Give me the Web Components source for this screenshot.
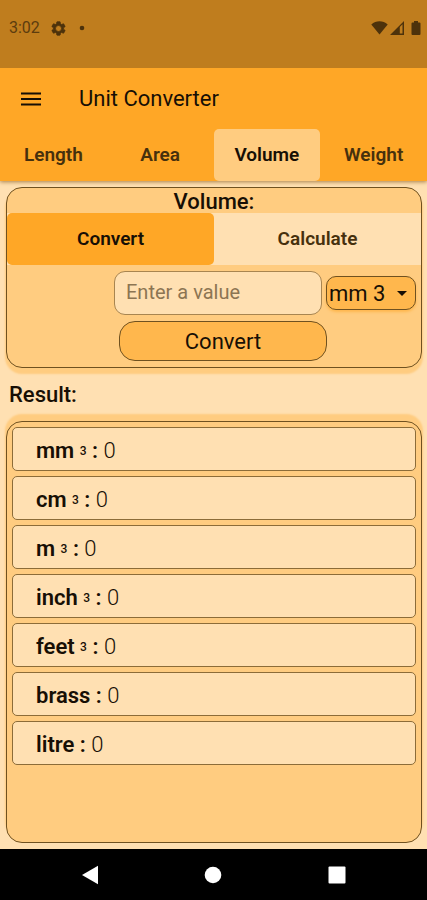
<!DOCTYPE html>
<html lang="en">
<head>
<meta charset="utf-8">
<meta name="viewport" content="width=device-width, initial-scale=1">
<title>Unit Converter</title>
<style>
:root{--bar:#ffa726;--status:#bf7d1e;--page:#ffe0b2;--card:#ffcc80;--accent:#ffb74d;--ink:#170f05;--line:#6f5120}
body{margin:0;background:var(--page);color:var(--ink);font-family:Roboto,"Noto Sans",sans-serif}
</style>
</head>
<body>
<unit-app></unit-app>
<script>
function define(name, html, setup) {
  const template = document.createElement('template');
  template.innerHTML = html;
  customElements.define(name, class extends HTMLElement {
    constructor() {
      super();
      this.attachShadow({ mode: 'open' }).append(template.content.cloneNode(true));
    }
    connectedCallback() { if (setup) setup(this, this.shadowRoot); }
  });
}

define('status-bar', `
<style>
:host{display:flex;justify-content:space-between;align-items:flex-start;box-sizing:border-box;height:68px;padding:18px 6px 0 9px;background:var(--status);color:#5c3c0e;font-size:16px;line-height:20px}
div{display:flex;align-items:center;height:20px}
svg{display:block;fill:#4d320b}
.gear{margin:0 12px 0 10px;stroke:#4d320b;stroke-width:1}
.signal{margin:0 7px 0 2px}
</style>
<div><span>3:02</span>
<svg class="gear" width="17" height="17" viewBox="0 0 24 24"><path d="M19.14 12.94c.04-.3.06-.61.06-.94s-.02-.64-.07-.94l2.03-1.58a.49.49 0 0 0 .12-.61l-1.92-3.32a.49.49 0 0 0-.59-.22l-2.39.96c-.5-.38-1.03-.7-1.62-.94l-.36-2.54a.48.48 0 0 0-.48-.41h-3.84c-.24 0-.43.17-.47.41l-.36 2.54c-.59.24-1.13.57-1.62.94l-2.39-.96a.48.48 0 0 0-.59.22L2.74 8.87a.48.48 0 0 0 .12.61l2.03 1.58c-.05.3-.09.63-.09.94s.02.64.07.94l-2.03 1.58a.49.49 0 0 0-.12.61l1.92 3.32c.12.22.37.29.59.22l2.39-.96c.5.38 1.03.7 1.62.94l.36 2.54c.05.24.24.41.48.41h3.84c.24 0 .44-.17.47-.41l.36-2.54c.59-.24 1.13-.56 1.62-.94l2.39.96c.22.08.47 0 .59-.22l1.92-3.32a.48.48 0 0 0-.12-.61zM12 16.2a4.2 4.2 0 1 1 0-8.4 4.2 4.2 0 0 1 0 8.400z"/></svg>
<svg width="6" height="6" viewBox="0 0 6 6"><circle cx="3" cy="3" r="2.300"/></svg></div>
<div>
<svg width="17" height="14" viewBox="0 0 17 14"><path d="M.3 3.400C5-.7 12-.7 16.700 3.400L8.500 13.600z"/></svg>
<svg class="signal" width="14" height="14" viewBox="0 0 14 14"><path fill-rule="evenodd" d="M0 14L14 0v14zM9.800 5.900v6.600h2.700V3.200z"/></svg>
<svg width="10" height="14" viewBox="0 0 10 14"><path d="M3 0h4v1.500h1.500q1 0 1 1v10.500q0 1-1 1h-7q-1 0-1-1V2.500q0-1 1-1H3z"/></svg>
</div>`);

define('app-bar', `
<style>
:host{display:flex;align-items:center;height:61px;padding:0 20px;background:var(--bar);gap:37px}
button{display:block;border:0;background:none;padding:0;height:24px;width:22px;cursor:pointer}
svg{display:block;stroke:var(--ink);stroke-width:2}
h1{margin:0;padding-top:1px;font-size:22px;line-height:28px;font-weight:450}
</style>
<button type="button" aria-label="Open menu"><svg width="22" height="24" viewBox="0 0 22 24"><path d="M1 6.500h20M1 12h20M1 17.500h20"/></svg></button>
<h1><slot></slot></h1>`);

define('tab-button', `
<style>
:host{display:block;flex:1 1 0;min-width:0}
button{display:block;width:100%;height:52px;border:0;padding:0 0 1px;background:none;border-radius:5px;font:600 19px/24px Roboto,"Noto Sans",sans-serif;color:#46300d;cursor:pointer}
:host([selected]) button{background:var(--tab-on,var(--card));color:var(--ink)}
</style>
<button type="button" role="tab"><slot></slot></button>`, (host, root) => {
  root.querySelector('button').setAttribute('aria-selected', host.hasAttribute('selected'));
});

define('tab-strip', `
<style>
:host{display:flex;background:var(--strip,var(--bar))}
</style>
<slot></slot>`, host => host.setAttribute('role', 'tablist'));

define('text-entry', `
<style>
:host{display:block;width:50%}
input{box-sizing:border-box;display:block;width:100%;height:44px;border:1px solid #a88550;border-radius:11px;padding:0 11px 3px;background:var(--page);color:var(--ink);font:400 20px/24px Roboto,"Noto Sans",sans-serif}
input::placeholder{color:#8c7552;opacity:1}
</style>
<input type="text" inputmode="decimal" aria-label="Value" placeholder="Enter a value">`);

define('unit-select', `
<style>
:host{display:grid;width:90px}
select,svg{grid-area:1/1}
select{appearance:none;box-sizing:border-box;width:100%;height:34px;border:1px solid var(--line);border-radius:10px;padding:1px 2px 0;background:var(--accent);color:var(--ink);font:450 22px/28px Roboto,"Noto Sans",sans-serif;box-shadow:0 2px 3px #ffb74d}
svg{justify-self:end;align-self:center;margin-right:9px;pointer-events:none;fill:var(--ink)}
</style>
<select aria-label="Unit"><option>mm 3</option><option>cm 3</option><option>m 3</option><option>inch 3</option><option>feet 3</option><option>brass</option><option>litre</option></select>
<svg width="10" height="5" viewBox="0 0 10 5"><path d="M0 0h10L5 5z"/></svg>`);

define('action-button', `
<style>
:host{display:block;width:50%}
button{box-sizing:border-box;display:block;width:100%;height:40px;border:1px solid var(--line);border-radius:16px;background:var(--accent);color:var(--ink);font:450 22px/28px Roboto,"Noto Sans",sans-serif;padding:1px 0 0;cursor:pointer}
</style>
<button type="button"><slot></slot></button>`);

define('converter-card', `
<style>
:host{display:block;--tab-on:var(--bar);--strip:var(--page);border:1px solid var(--line);border-radius:16px;background:var(--card);box-shadow:0 5px 2px 1px var(--card)}
h2{margin:0;text-align:center;font-size:22px;line-height:25px;padding-top:1px;height:24px;font-weight:500}
.entry{display:flex;justify-content:flex-end;align-items:center;gap:4px;padding:6px 5px 0}
.entry text-entry{width:calc(50% + 6px)}
.action{display:flex;justify-content:center;padding:6px 0 6px 18px}
.action action-button{width:calc(50% + 10px)}
</style>
<h2>Volume:</h2>
<tab-strip><tab-button selected>Convert</tab-button><tab-button>Calculate</tab-button></tab-strip>
<div class="entry"><text-entry></text-entry><unit-select></unit-select></div>
<div class="action"><action-button>Convert</action-button></div>`);

define('result-row', `
<style>
:host{display:flex;align-items:center;box-sizing:border-box;height:44px;border:1px solid #8c6c38;border-radius:5px;padding:4px 23px 0;background:var(--page);font-size:22px;font-weight:300;line-height:28px;white-space:pre}
b{font-weight:600}
small{font-size:12px;line-height:12px;font-weight:500;vertical-align:3px}
</style>
<b></b><span><slot></slot></span>`, (host, root) => {
  const label = root.querySelector('b');
  label.textContent = host.getAttribute('unit') + ' ';
  const power = host.getAttribute('power');
  if (power) {
    const mark = document.createElement('small');
    mark.textContent = power;
    label.append(mark, ' ');
  }
  label.append(': ');
});

define('result-list', `
<style>
:host{display:flex;flex-direction:column;gap:5px;border:1px solid var(--line);border-radius:16px;padding:5px;background:var(--card);box-shadow:0 -6px 2px 1px var(--card)}
</style>
<slot></slot>`, host => host.setAttribute('role', 'list'));

define('nav-bar', `
<style>
:host{display:flex;justify-content:space-around;align-items:center;height:51px;padding:0 28px;background:#000}
button{display:block;border:0;padding:0;background:none;cursor:pointer}
svg{display:block;fill:#fff}
</style>
<button type="button" aria-label="Back"><svg width="18" height="20" viewBox="0 0 18 20"><path d="M1 10L17 .8v18.400z"/></svg></button>
<button type="button" aria-label="Home"><svg width="18" height="18" viewBox="0 0 18 18"><circle cx="9" cy="9" r="8.300"/></svg></button>
<button type="button" aria-label="Recent apps"><svg width="18" height="18" viewBox="0 0 18 18"><rect x=".5" y=".5" width="17" height="17" rx="1"/></svg></button>`);

define('unit-app', `
<style>
:host{display:flex;flex-direction:column;min-height:100vh}
header{box-shadow:0 1px 4px #a8804a}
main{display:flex;flex-direction:column;flex:1;padding:6px 5px 6px 6px}
h2{margin:0;padding:13px 3px 12px;font-size:22px;line-height:28px;font-weight:500}
result-list{flex:1}
</style>
<header>
<status-bar></status-bar>
<app-bar>Unit Converter</app-bar>
<tab-strip><tab-button>Length</tab-button><tab-button>Area</tab-button><tab-button selected>Volume</tab-button><tab-button>Weight</tab-button></tab-strip>
</header>
<main>
<converter-card></converter-card>
<h2>Result:</h2>
<result-list>
<result-row role="listitem" unit="mm" power="3">0</result-row>
<result-row role="listitem" unit="cm" power="3">0</result-row>
<result-row role="listitem" unit="m" power="3">0</result-row>
<result-row role="listitem" unit="inch" power="3">0</result-row>
<result-row role="listitem" unit="feet" power="3">0</result-row>
<result-row role="listitem" unit="brass">0</result-row>
<result-row role="listitem" unit="litre">0</result-row>
</result-list>
</main>
<nav-bar></nav-bar>`);
</script>
</body>
</html>
